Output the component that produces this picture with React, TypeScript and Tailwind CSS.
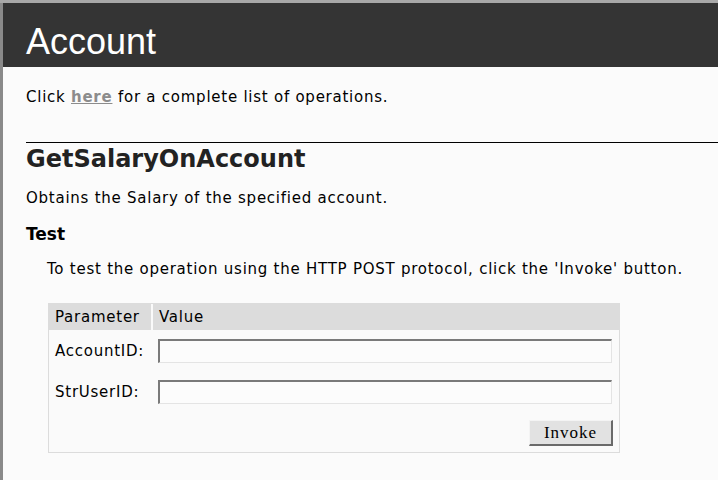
import React from "react";

export default function App() {
  const body = { fontFamily: '"DejaVu Sans", Verdana, sans-serif' };
  return (
    <div className="w-[718px] h-[480px] overflow-hidden bg-[#a8a8a8] pt-[3px]">
      <div className="h-[477px] border-l-[3px] border-[#8a8a8a] bg-[#fbfbfb] flex flex-col" style={body}>
        <div className="h-[64px] bg-[#343434] flex items-center pl-[23px] pt-[13px]">
          <span className="text-white text-[36px] leading-none" style={{ fontFamily: '"Liberation Sans", Arial, sans-serif' }}>Account</span>
        </div>
        <div className="pl-[23px] mt-[20px] text-[15px] leading-[20px] tracking-[0.75px] text-black">
          Click <a className="text-[#8c8c8c] font-bold underline">here</a> for a complete list of operations.
        </div>
        <div className="ml-[23px] mt-[35px] border-t border-black"></div>
        <div className="pl-[23px] mt-[2px] text-[24px] leading-[28px] font-bold text-[#222]">GetSalaryOnAccount</div>
        <div className="pl-[23px] mt-[15px] text-[15px] leading-[20px] tracking-[0.75px] text-black">Obtains the Salary of the specified account.</div>
        <div className="pl-[23px] mt-[15px] text-[17px] leading-[22px] font-bold text-black">Test</div>
        <div className="pl-[44px] mt-[14px] text-[15px] leading-[20px] tracking-[0.75px] text-black">
          To test the operation using the HTTP POST protocol, click the 'Invoke' button.
        </div>
        <div className="ml-[45px] mt-[24px] w-[572px] border border-[#dcdcdc] bg-[#fafafa] text-[15px] tracking-[0.75px] text-black">
          <div className="flex h-[26px] bg-[#dcdcdc]">
            <div className="w-[102px] pl-[6px] flex items-center">Parameter</div>
            <div className="w-[2px] bg-[#fafafa]"></div>
            <div className="pl-[6px] flex items-center">Value</div>
          </div>
          <div className="flex items-center mt-[9px] h-[24px]">
            <div className="w-[109px] pl-[6px]">AccountID:</div>
            <div className="w-[454px] h-[24px] border-t-2 border-l-2 border-r border-b border-t-[#7a7a7a] border-l-[#7a7a7a] border-r-[#e4e4e4] border-b-[#e4e4e4] bg-[#fcfcfc]"></div>
          </div>
          <div className="flex items-center mt-[17px] h-[24px]">
            <div className="w-[109px] pl-[6px]">StrUserID:</div>
            <div className="w-[454px] h-[24px] border-t-2 border-l-2 border-r border-b border-t-[#7a7a7a] border-l-[#7a7a7a] border-r-[#e4e4e4] border-b-[#e4e4e4] bg-[#fcfcfc]"></div>
          </div>
          <div className="flex justify-end mt-[16px] pr-[6px] pb-[6px]">
            <div className="w-[84px] h-[26px] flex items-center justify-center bg-[#e2e2e2] border-t border-l border-b-2 border-r-2 border-t-[#f4f4f4] border-l-[#f4f4f4] border-b-[#6a6a6a] border-r-[#6a6a6a] text-[17px] tracking-[1px]" style={{ fontFamily: '"Liberation Serif", "Times New Roman", serif' }}>
              Invoke
            </div>
          </div>
        </div>
      </div>
    </div>
  );
}
